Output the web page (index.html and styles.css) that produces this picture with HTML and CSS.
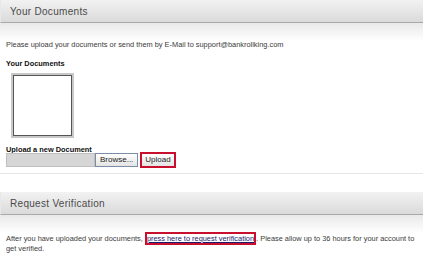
FILE: index.html
```html
<!DOCTYPE html>
<html lang="en">
<head>
    <meta charset="UTF-8">
    <title>Your Documents</title>
    <link rel="stylesheet" href="styles.css">
</head>
<body>
    <div class="box">
        <h2 class="box-title">Your Documents</h2>
        <div class="box-body">
            <p class="intro">Please upload your documents or send them by E-Mail to support@bankrollking.com</p>
            <div class="label">Your Documents</div>
            <div class="thumb"></div>
            <div class="label">Upload a new Document</div>
            <div class="upload-row">
                <span class="file-field"></span>
                <button class="btn">Browse...</button>
                <button class="btn btn-marked">Upload</button>
            </div>
        </div>
    </div>

    <div class="box box-second">
        <h2 class="box-title">Request Verification</h2>
        <div class="box-body">
            <p class="intro">After you have uploaded your documents, <a href="#" class="marked-link">press here to request verification</a>. Please allow up to 36 hours for your account to<br>get verified.</p>
        </div>
    </div>
</body>
</html>
```

FILE: styles.css
```css
body {
    margin: 0;
    background: #fff;
    font-family: Arial, "Liberation Sans", sans-serif;
    font-size: 7.4px;
    color: #3a3a3a;
}
.box {
    width: 423px;
    border-bottom: 1px solid #e6e6e6;
}
.box-second {
    margin-top: 18px;
    border-bottom: none;
}
.box-title {
    margin: 0;
    height: 22px;
    padding-left: 9px;
    font-size: 10px;
    font-weight: normal;
    letter-spacing: 0.3px;
    line-height: 23px;
    color: #4a4a4a;
    background: linear-gradient(#f2f2f2, #dadada);
    border-bottom: 1px solid #a9a9a9;
    border-left: 1px solid #e8e8e8;
}
.box-body {
    padding: 17px 6px 6px;
    background: linear-gradient(#e9e9e9, #fff 18px);
}
.box-second .box-body {
    padding-top: 19px;
}
.intro {
    margin: 0;
    line-height: 10px;
}
.label {
    margin-top: 9px;
    font-weight: bold;
    color: #111;
}
.thumb {
    width: 57px;
    height: 59px;
    margin: 7px 0 6px 7px;
    background: #fff;
    border: 1px solid #555;
    box-shadow: 0 0 0 2px #c8c8c8;
}
.upload-row {
    display: flex;
    align-items: stretch;
    height: 14px;
    margin-top: -1px;
}
.file-field {
    width: 89px;
    background: #d6d6d6;
    border: 1px solid #c0c0c0;
    box-sizing: border-box;
}
.btn {
    margin: 0;
    padding: 0 4px;
    font-family: inherit;
    font-size: 8px;
    line-height: 12px;
    color: #222;
    background: linear-gradient(#fff, #e4e4e4);
    border: 1px solid #7a8ea8;
}
.btn-marked {
    margin-left: 3px;
    padding: 0 3px;
    outline: 2px solid #c8102e;
    outline-offset: -1px;
    border-color: #888;
}
.marked-link {
    margin: 0 2px;
    color: #1a1a6a;
    text-decoration: underline;
    outline: 2px solid #c8102e;
    outline-offset: 0;
}
```
